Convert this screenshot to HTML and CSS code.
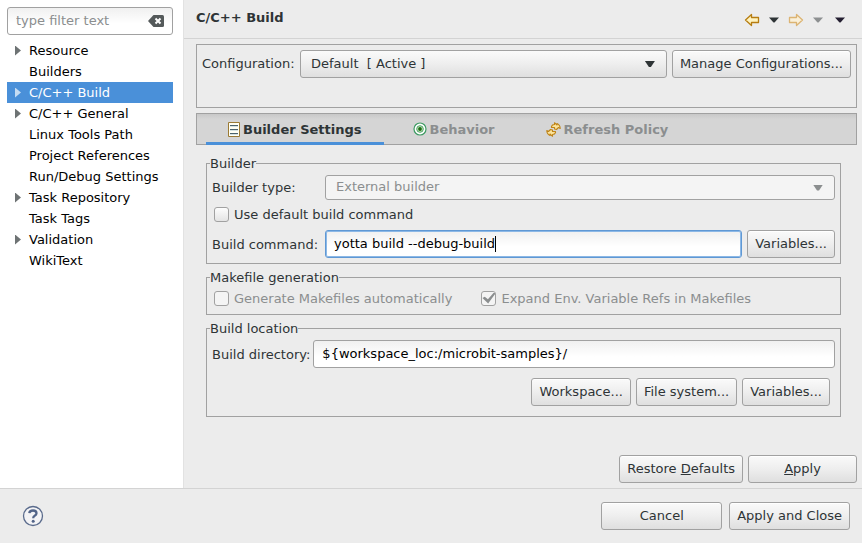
FILE: index.html
```html
<!DOCTYPE html>
<html lang="en">
<head>
<meta charset="utf-8">
<title>C/C++ Build</title>
<link rel="stylesheet" href="styles.css">
</head>
<body>
<div class="dialog">
  <div class="body">
    <nav class="sidebar" aria-label="Settings">
      <div class="search">
        <input class="search-input" type="text" placeholder="type filter text" aria-label="Filter">
        <button class="clear" type="button" aria-label="Clear">
          <svg width="16" height="12" viewBox="0 0 16 12"><path d="M5.500 0H14.500Q16 0 16 1.500V10.500Q16 12 14.500 12H5.500L0 6Z" fill="#555a5b"/><path d="M7.500 3.500l5 5M12.500 3.500l-5 5" stroke="#fff" stroke-width="2"/></svg>
        </button>
      </div>
      <ul class="tree">
        <li><a class="item parent" href="#">Resource</a></li>
        <li><a class="item" href="#">Builders</a></li>
        <li><a class="item parent selected" href="#" aria-current="page">C/C++ Build</a></li>
        <li><a class="item parent" href="#">C/C++ General</a></li>
        <li><a class="item" href="#">Linux Tools Path</a></li>
        <li><a class="item" href="#">Project References</a></li>
        <li><a class="item" href="#">Run/Debug Settings</a></li>
        <li><a class="item parent" href="#">Task Repository</a></li>
        <li><a class="item" href="#">Task Tags</a></li>
        <li><a class="item parent" href="#">Validation</a></li>
        <li><a class="item" href="#">WikiText</a></li>
      </ul>
    </nav>
    <main class="page">
      <header class="header">
        <h1 class="title">C/C++ Build</h1>
        <div class="history">
          <button class="tool" type="button" aria-label="Back"><svg width="16" height="14" viewBox="0 0 16 14"><path d="M1.500 7L7.500 1.500V4.500H14.500V9.500H7.500V12.500Z" fill="#fff3bf" stroke="#b67d10" stroke-width="1.300" stroke-linejoin="round"/></svg></button>
          <button class="tool" type="button" aria-label="Back history"><svg width="10" height="6" viewBox="0 0 10 6"><path d="M0 .5H10L5.500 5.500H4.500Z" fill="#2e3436"/></svg></button>
          <button class="tool" type="button" aria-label="Forward" disabled><svg width="16" height="14" viewBox="0 0 16 14"><path d="M14.500 7L8.500 1.500V4.500H1.500V9.500H8.500V12.500Z" fill="#faf0d9" stroke="#dcb473" stroke-width="1.300" stroke-linejoin="round"/></svg></button>
          <button class="tool" type="button" aria-label="Forward history" disabled><svg width="10" height="6" viewBox="0 0 10 6"><path d="M0 .5H10L5.500 5.500H4.500Z" fill="#8d9091"/></svg></button>
          <button class="tool" type="button" aria-label="Menu"><svg width="10" height="6" viewBox="0 0 10 6"><path d="M0 .5H10L5.500 5.500H4.500Z" fill="#241f31"/></svg></button>
        </div>
      </header>
      <div class="content">
        <section class="config">
          <label class="config-label" for="config">Configuration:</label>
          <div class="combo">
            <select id="config"><option>Default&nbsp; [ Active ]</option></select>
          </div>
          <button class="btn" type="button">Manage Configurations...</button>
        </section>
        <div class="tabs" role="tablist">
          <button class="tab active" type="button" role="tab" aria-selected="true">
            <svg width="12" height="15" viewBox="0 0 12 15"><path d="M.5.5H11.500V14.500H.5Z" fill="#fffff4" stroke="#9b7a34"/><path d="M2 3.500H10M2 7.500H10M2 11.500H10" stroke="#4b626c" stroke-width="1.200"/><path d="M2 4.500H10M2 8.500H10M2 12.500H10" stroke="#b8cdd2" stroke-width=".6"/></svg>
            Builder Settings
          </button>
          <button class="tab" type="button" role="tab" aria-selected="false">
            <svg width="14" height="14" viewBox="0 0 14 14"><circle cx="7" cy="7" r="6" fill="#fff" stroke="#3c9a62" stroke-width="1.200"/><circle cx="7" cy="7" r="3.300" fill="#c9e6b8" stroke="#4fa56d" stroke-width="1"/><circle cx="7" cy="7" r="1.900" fill="#1c6b14"/></svg>
            Behavior
          </button>
          <button class="tab" type="button" role="tab" aria-selected="false">
            <svg width="15" height="15" viewBox="0 0 15 15"><g fill="#fbe39a" stroke="#bf8419" stroke-width="1.100" stroke-linejoin="round"><path d="M5.500 5.500V4.500Q6 2.500 8.500 2.500V.7L11 3V1.500Q14.200 3 14.200 6.500L12.500 5.500L10.500 7.500L8.500 7V5.500Z"/><path d="M9.500 9.500V10.500Q9 12.500 6.500 12.500V14.300L4 12V13.500Q.8 12 .8 8.500L2.500 9.500L4.500 7.500L6.500 8V9.500Z"/></g></svg>
            Refresh Policy
          </button>
        </div>
        <div class="panel">
          <fieldset class="group builder">
            <legend>Builder</legend>
            <label for="type">Builder type:</label>
            <div class="combo muted wide">
              <select id="type" disabled><option>External builder</option></select>
            </div>
            <label class="check whole"><input type="checkbox">Use default build command</label>
            <label for="command">Build command:</label>
            <input class="field focused" id="command" type="text" value="yotta build --debug-build">
            <button class="btn" type="button">Variables...</button>
          </fieldset>
          <fieldset class="group makefile">
            <legend>Makefile generation</legend>
            <label class="check off"><input type="checkbox" disabled>Generate Makefiles automatically</label>
            <label class="check off"><input type="checkbox" checked disabled>Expand Env. Variable Refs in Makefiles</label>
          </fieldset>
          <fieldset class="group">
            <legend>Build location</legend>
            <div class="directory">
              <label for="directory">Build directory:</label>
              <input class="field" id="directory" type="text" value="${workspace_loc:/microbit-samples}/">
            </div>
            <div class="pickers">
              <button class="btn" type="button">Workspace...</button>
              <button class="btn" type="button">File system...</button>
              <button class="btn" type="button">Variables...</button>
            </div>
          </fieldset>
        </div>
        <div class="actions">
          <button class="btn" type="button">Restore <u>D</u>efaults</button>
          <button class="btn apply" type="button"><u>A</u>pply</button>
        </div>
      </div>
    </main>
  </div>
  <footer class="footer">
    <button class="tool" type="button" aria-label="Help">
      <svg width="22" height="22" viewBox="0 0 22 22"><circle cx="11" cy="11" r="9.500" fill="#f3f3f5" stroke="#5a6b8c" stroke-width="1.300"/><path d="M7.300 8.200Q7.600 5.500 11 5.500Q14.500 5.500 14.500 8.200Q14.500 9.700 12.700 10.700Q11.200 11.500 11.200 13.200" fill="none" stroke="#526488" stroke-width="2.300"/><circle cx="11.200" cy="16.200" r="1.500" fill="#526488"/></svg>
    </button>
    <div class="confirm">
      <button class="btn" type="button">Cancel</button>
      <button class="btn" type="button">Apply and Close</button>
    </div>
  </footer>
</div>
</body>
</html>
```
FILE: styles.css
```css
* {
  box-sizing: border-box;
}

body {
  margin: 0;
  background: #ececec;
  color: #2e3436;
  font: 13px/17px "DejaVu Sans", sans-serif;
}

button,
input,
select {
  margin: 0;
  font: inherit;
  color: inherit;
}

svg {
  display: block;
  flex: none;
}

.dialog {
  display: flex;
  flex-direction: column;
  min-height: 100vh;
}

.body {
  display: flex;
  flex: 1;
}

/* Sidebar */

.sidebar {
  flex: none;
  width: 184px;
  padding: 7px 10px 7px 7px;
  background: #fff;
  border-right: 1px solid #e2e2e2;
}

.search {
  display: flex;
  align-items: center;
  height: 28px;
  padding: 0 8px;
  border: 1px solid #a1a1a1;
  border-radius: 3px;
  background: linear-gradient(#f0f0f0, #fff 60%);
}

.search-input {
  flex: 1;
  min-width: 0;
  padding: 0 0 2px;
  border: 0;
  outline: 0;
  background: none;
}

.search-input::placeholder {
  color: #8b8e8f;
  opacity: 1;
}

.clear,
.tool {
  padding: 0;
  border: 0;
  background: none;
}

.tree {
  margin: 5px 0 0;
  padding: 0;
  list-style: none;
}

.item {
  display: flex;
  align-items: center;
  height: 21px;
  padding-left: 22px;
  color: #000;
  text-decoration: none;
}

.parent {
  padding-left: 8px;
}

.parent::before {
  content: "";
  width: 6px;
  height: 10px;
  margin-right: 8px;
  background: #6e7374;
  clip-path: polygon(0 0, 100% 50%, 0 100%);
}

.selected {
  background: #4a90d9;
  color: #fff;
}

.selected::before {
  background: #c5dcf3;
}

/* Page */

.page {
  display: flex;
  flex: 1;
  flex-direction: column;
  min-width: 0;
}

.header {
  display: flex;
  align-items: center;
  justify-content: space-between;
  height: 39px;
  padding: 0 17px 0 12px;
  border-bottom: 1px solid #d3d3d3;
}

.title {
  margin: 0 0 4px;
  font-size: 13px;
}

.history {
  display: flex;
  align-items: center;
  gap: 9px;
  padding-top: 2px;
}

.tool:nth-child(5) {
  margin-left: 3px;
}

.content {
  display: flex;
  flex: 1;
  flex-direction: column;
  padding: 5px 5px 5px 12px;
}

.config {
  display: flex;
  align-items: flex-start;
  gap: 5px;
  min-height: 64px;
  padding: 5px;
  border: 1px solid #a1a1a1;
}

.config-label {
  flex: none;
  width: 93px;
  line-height: 28px;
}

.btn {
  height: 28px;
  padding: 0 7px 2px;
  border: 1px solid #a1a1a1;
  border-radius: 3px;
  background: linear-gradient(#fafafa, #eeeeee 50%, #dfdfdf);
  box-shadow: inset 0 1px #fff;
  white-space: nowrap;
}

.combo {
  display: grid;
  flex: 1;
  align-items: center;
}

.combo select {
  grid-area: 1 / 1;
  width: 100%;
  height: 28px;
  padding: 0 28px 2px 10px;
  border: 1px solid #a1a1a1;
  border-radius: 3px;
  background: linear-gradient(#fafafa, #eeeeee 50%, #dfdfdf);
  appearance: none;
}

.combo::after {
  content: "";
  grid-area: 1 / 1;
  z-index: 1;
  justify-self: end;
  width: 10px;
  height: 6px;
  margin-right: 12px;
  background: #2e3436;
  clip-path: polygon(0 0, 100% 0, 60% 100%, 40% 100%);
  pointer-events: none;
}

.combo.muted select {
  height: 25px;
  background: #f4f4f4;
  color: #8b8e8f;
  opacity: 1;
}

.combo.muted::after {
  background: #8b8e8f;
}

/* Tabs */

.tabs {
  display: flex;
  gap: 7px;
  height: 32px;
  margin-top: 5px;
  padding: 0 9px;
  border: 1px solid #a1a1a1;
  background: linear-gradient(#c8c8c8, #d5d5d5 5px);
}

.tab {
  display: flex;
  align-items: center;
  gap: 3px;
  padding: 0 22px;
  border: 0;
  background: none;
  color: #8b8e8f;
  font-weight: bold;
  white-space: nowrap;
}

.tab.active {
  color: #2e3436;
  box-shadow: inset 0 -2px #4a90d9, 0 1px #4a90d9;
}

/* Groups */

.panel {
  display: flex;
  flex-direction: column;
  gap: 5px;
  padding: 10px 16px 10px 10px;
}

.group {
  min-width: 0;
  margin: 0;
  padding: 3px 5px 5px;
  border: 1px solid #a1a1a1;
}

.group legend {
  margin-left: -2px;
  padding: 0;
}

.builder {
  display: grid;
  grid-template-columns: 108px 1fr auto;
  align-items: center;
  gap: 5px;
}

.wide {
  grid-column: 2 / 4;
}

.whole {
  grid-column: 1 / 4;
}

.check {
  display: flex;
  align-items: center;
  gap: 5px;
  height: 20px;
  padding: 0 0 2px 2px;
}

.check input {
  display: grid;
  place-items: center;
  width: 15px;
  height: 15px;
  border: 1px solid #a1a1a1;
  border-radius: 3px;
  background: linear-gradient(#fdfdfd, #e4e4e4);
  appearance: none;
}

.check input:disabled {
  background: #f4f4f4;
}

.check input:checked::before {
  content: "";
  width: 13px;
  height: 11px;
  background: #8b8e8f;
  clip-path: polygon(0 50%, 18% 38%, 42% 62%, 88% 0, 100% 10%, 44% 100%);
}

.off {
  color: #8b8e8f;
}

.makefile {
  display: flex;
  gap: 27px;
}

.field {
  width: 100%;
  min-width: 0;
  height: 28px;
  padding: 0 8px 2px;
  border: 1px solid #a1a1a1;
  border-radius: 3px;
  outline: 0;
  background: linear-gradient(#f0f0f0, #fff 60%);
  color: #000;
}

.focused {
  border-color: #5f98d4;
  background:
    linear-gradient(#000, #000) 169px 50% / 1px 16px no-repeat,
    linear-gradient(#f0f0f0, #fff 60%);
  box-shadow: inset 0 0 0 1px #8cb8e6;
}

.directory {
  display: flex;
  align-items: center;
  gap: 3px;
}

.directory label {
  flex: none;
}

.pickers {
  display: flex;
  justify-content: flex-end;
  gap: 5px;
  padding: 10px 5px 5px;
}

.actions {
  display: flex;
  justify-content: flex-end;
  gap: 5px;
  margin-top: auto;
}

.apply {
  min-width: 109px;
}

/* Footer */

.footer {
  display: flex;
  align-items: center;
  justify-content: space-between;
  padding: 13px 12px 13px 22px;
  border-top: 1px solid #d3d3d3;
}

.confirm {
  display: grid;
  grid-template-columns: 1fr 1fr;
  gap: 7px;
}
```
